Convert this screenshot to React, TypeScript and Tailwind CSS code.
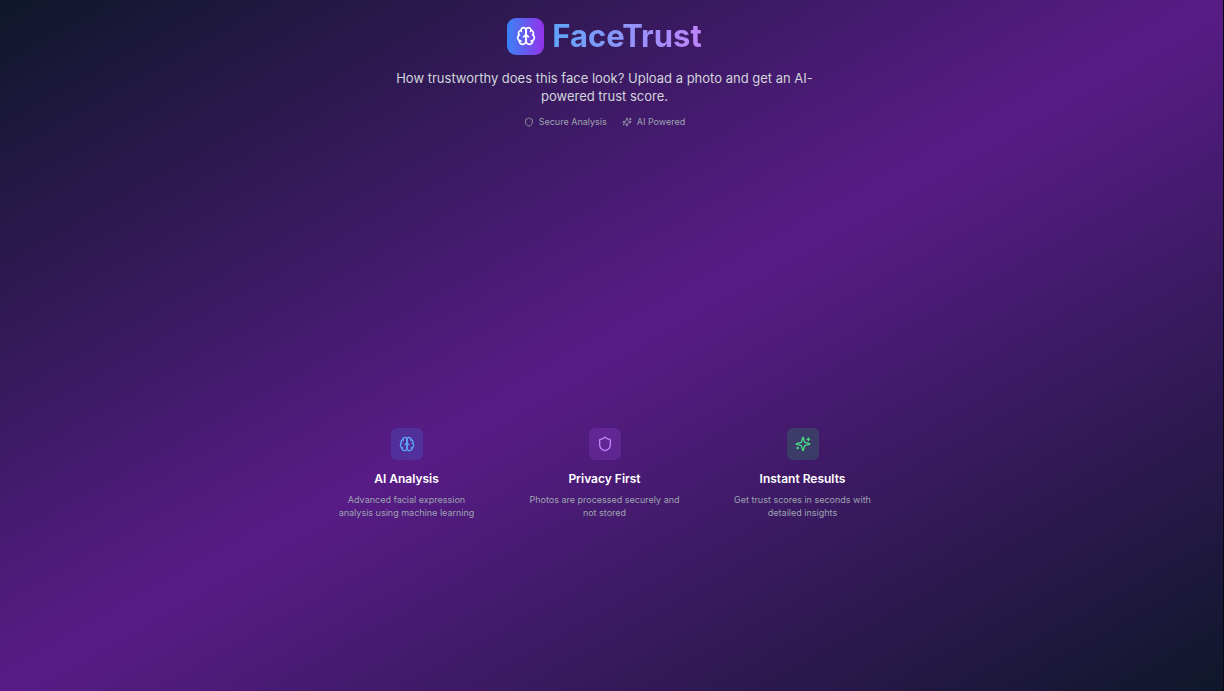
import type { ComponentType, ReactNode } from "react"
import { Shield } from "lucide-react"

interface IconProps {
  className?: string
}

interface FeatureProps {
  icon: ComponentType<IconProps>
  title: string
  description: string
  tileClass: string
  iconClass: string
}

function Icon({ className, children }: IconProps & { children: ReactNode }) {
  return (
    <svg
      viewBox="0 0 24 24"
      fill="none"
      stroke="currentColor"
      strokeWidth={2}
      strokeLinecap="round"
      strokeLinejoin="round"
      aria-hidden="true"
      className={className}
    >
      {children}
    </svg>
  )
}

function Brain({ className }: IconProps) {
  return (
    <Icon className={className}>
      <path d="M12 5a3 3 0 1 0-5.997.125 4 4 0 0 0-2.526 5.77 4 4 0 0 0 .556 6.588A4 4 0 1 0 12 18Z" />
      <path d="M12 5a3 3 0 1 1 5.997.125 4 4 0 0 1 2.526 5.77 4 4 0 0 1-.556 6.588A4 4 0 1 1 12 18Z" />
      <path d="M15 13a4.5 4.5 0 0 1-3-4 4.5 4.5 0 0 1-3 4" />
      <path d="M17.599 6.5a3 3 0 0 0 .399-1.375" />
      <path d="M6.003 5.125A3 3 0 0 0 6.401 6.5" />
      <path d="M3.477 10.896a4 4 0 0 1 .585-.396" />
      <path d="M19.938 10.5a4 4 0 0 1 .585.396" />
      <path d="M6 18a4 4 0 0 1-1.967-.516" />
      <path d="M19.967 17.484A4 4 0 0 1 18 18" />
    </Icon>
  )
}

function Sparkles({ className }: IconProps) {
  return (
    <Icon className={className}>
      <path d="M9.937 15.5A2 2 0 0 0 8.5 14.063l-6.135-1.582a.5.5 0 0 1 0-.962L8.5 9.936A2 2 0 0 0 9.937 8.5l1.582-6.135a.5.5 0 0 1 .963 0L14.063 8.5A2 2 0 0 0 15.5 9.937l6.135 1.581a.5.5 0 0 1 0 .964L15.5 14.063a2 2 0 0 0-1.437 1.437l-1.582 6.135a.5.5 0 0 1-.963 0z" />
      <path d="M20 3v4" />
      <path d="M22 5h-4" />
      <path d="M4 17v2" />
      <path d="M5 18H3" />
    </Icon>
  )
}

const features: FeatureProps[] = [
  {
    icon: Brain,
    title: "AI Analysis",
    description: "Advanced facial expression analysis using machine learning",
    tileClass: "bg-[#3b82f6]/20",
    iconClass: "text-[#60a5fa]",
  },
  {
    icon: Shield,
    title: "Privacy First",
    description: "Photos are processed securely and not stored",
    tileClass: "bg-[#a855f7]/20",
    iconClass: "text-[#c084fc]",
  },
  {
    icon: Sparkles,
    title: "Instant Results",
    description: "Get trust scores in seconds with detailed insights",
    tileClass: "bg-[#22c55e]/20",
    iconClass: "text-[#4ade80]",
  },
]

function Feature({ icon: FeatureIcon, title, description, tileClass, iconClass }: FeatureProps) {
  return (
    <div className="flex flex-col items-center px-[14px] text-center">
      <div className={`mb-[11px] flex h-8 w-8 items-center justify-center rounded-md ${tileClass}`}>
        <FeatureIcon className={`h-4 w-4 ${iconClass}`} />
      </div>
      <h3 className="mb-[6px] text-[12px] leading-4 font-semibold text-white">{title}</h3>
      <p className="text-[9px] leading-[13px] text-[#9ca3af]">{description}</p>
    </div>
  )
}

export default function App() {
  return (
    <div className="min-h-screen border-r border-[#0b0614] bg-linear-to-br/srgb from-[#0f172a] via-[#581c87] to-[#0f172a] px-4 pt-4 font-['Inter',sans-serif]">
      <div className="mr-[14px] flex flex-col items-center">
        {/* Header */}
        <header className="flex flex-col items-center text-center">
          <div className="mb-[13px] flex items-center gap-2">
            <div className="flex h-[37px] w-[37px] items-center justify-center rounded-[9px] bg-linear-to-r/srgb from-[#3b82f6] to-[#9333ea]">
              <Brain className="h-5 w-5 text-white" />
            </div>
            <h1 className="bg-linear-to-r/srgb from-[#60a5fa] to-[#c084fc] bg-clip-text text-[31px] leading-10 font-bold text-transparent">
              FaceTrust
            </h1>
          </div>
          <p className="max-w-[440px] text-[13px] leading-[18px] text-[#d1d5db]">
            How trustworthy does this face look? Upload a photo and get an AI-powered trust score.
          </p>
          <div className="mt-[11px] flex items-center gap-[15px] text-[9px] leading-3 text-[#9ca3af]">
            <div className="flex items-center gap-[5px]">
              <Shield className="h-[10px] w-[10px]" />
              <span>Secure Analysis</span>
            </div>
            <div className="flex items-center gap-[5px]">
              <Sparkles className="h-[10px] w-[10px]" />
              <span>AI Powered</span>
            </div>
          </div>
        </header>

        {/* Features */}
        <section className="mt-75 grid w-full max-w-[576px] grid-cols-3 gap-[18px]">
          {features.map((feature) => (
            <Feature key={feature.title} {...feature} />
          ))}
        </section>
      </div>
    </div>
  )
}
